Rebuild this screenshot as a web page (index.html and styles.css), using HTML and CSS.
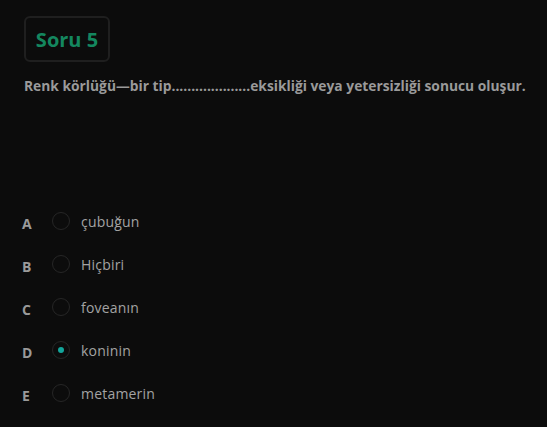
FILE: index.html
```html
<!DOCTYPE html>
<html lang="tr">
<head>
<meta charset="utf-8">
<link rel="stylesheet" href="styles.css">
</head>
<body>
<div class="page">
  <div class="title-box"><span class="title">Soru 5</span></div>
  <p class="question">Renk körlüğü—bir tip....................eksikliği veya yetersizliği sonucu oluşur.</p>
  <ul class="options">
    <li class="option"><span class="letter">A</span><span class="radio"></span><span class="label">çubuğun</span></li>
    <li class="option"><span class="letter">B</span><span class="radio"></span><span class="label">Hiçbiri</span></li>
    <li class="option"><span class="letter">C</span><span class="radio"></span><span class="label">foveanın</span></li>
    <li class="option"><span class="letter">D</span><span class="radio checked"></span><span class="label">koninin</span></li>
    <li class="option"><span class="letter">E</span><span class="radio"></span><span class="label">metamerin</span></li>
  </ul>
</div>
</body>
</html>
```
FILE: styles.css
```css
html, body {
  margin: 0;
  padding: 0;
  background: #0c0c0c;
  height: 100%;
}
body {
  font-family: "Open Sans", "DejaVu Sans", sans-serif;
  color: #9b9b9b;
}
.page {
  padding: 16px 24px 0 24px;
}
.title-box {
  display: inline-flex;
  align-items: center;
  justify-content: center;
  box-sizing: border-box;
  width: 86px;
  height: 46px;
  border: 2px solid #1f1f1f;
  border-radius: 6px;
}
.title {
  color: #14875f;
  font-size: 20px;
  font-weight: 700;
}
.question {
  margin: 14px 0 0 0;
  font-size: 13.8px;
  line-height: 20px;
  font-weight: 700;
  color: #9a9a9a;
  white-space: nowrap;
}
.options {
  list-style: none;
  margin: 116px 0 0 0;
  padding: 0;
  display: flex;
  flex-direction: column;
  gap: 25px;
}
.option {
  display: flex;
  align-items: center;
  height: 18px;
}
.letter {
  width: 30px;
  margin-left: -2px;
  font-size: 14px;
  font-weight: 700;
  color: #9a9a9a;
  position: relative;
  top: 2px;
}
.radio {
  box-sizing: border-box;
  width: 18px;
  height: 18px;
  border: 1px solid #262626;
  border-radius: 50%;
  display: flex;
  align-items: center;
  justify-content: center;
}
.radio.checked::after {
  content: "";
  width: 6px;
  height: 6px;
  border-radius: 50%;
  background: #13a59b;
}
.label {
  margin-left: 11px;
  font-size: 14px;
  letter-spacing: 0.2px;
  color: #a3a3a3;
}
```
